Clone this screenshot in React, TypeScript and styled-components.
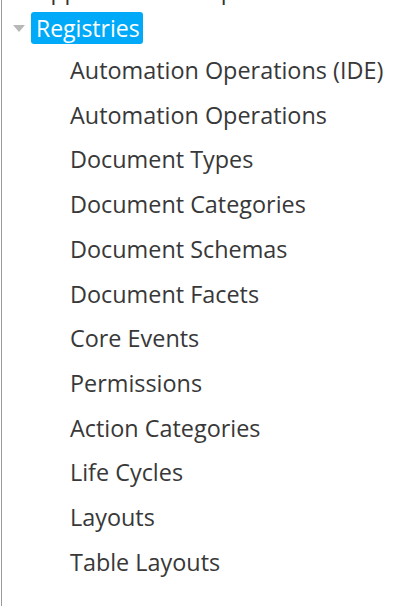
import React from 'react';
import styled, { createGlobalStyle } from 'styled-components';

const GlobalStyle = createGlobalStyle`
  html, body {
    margin: 0;
    padding: 0;
    background: #fff;
    overflow: hidden;
  }
  body {
    font-family: "Open Sans", "Liberation Sans", sans-serif;
  }
`;

const Panel = styled.div`
  width: 405px;
  height: 606px;
  box-sizing: border-box;
  border-left: 1px solid #9a9a9a;
  margin-left: 1px;
  overflow: hidden;
`;

const Tree = styled.ul`
  list-style: none;
  margin: -26px 0 0;
  padding: 0;
  display: flex;
  flex-direction: column;
  gap: 6px;
`;

const Node = styled.li`
  display: flex;
  flex-direction: column;
`;

const NodeRow = styled.div`
  display: flex;
  align-items: center;
  height: 32px;
  padding-left: 11px;
  gap: 6px;
`;

const Caret = styled.span<{ $hidden?: boolean }>`
  width: 0;
  height: 0;
  margin-top: 1px;
  border-left: 6px solid transparent;
  border-right: 6px solid transparent;
  border-top: 7px solid #b8b8b8;
  visibility: ${(p) => (p.$hidden ? 'hidden' : 'visible')};
`;

const Label = styled.span<{ $selected?: boolean }>`
  font-size: 23px;
  line-height: 32px;
  padding: 0 3px 0 5px;
  border-radius: 3px;
  white-space: nowrap;
  color: ${(p) => (p.$selected ? '#fff' : '#333')};
  background: ${(p) => (p.$selected ? '#00aaf9' : 'transparent')};
`;

const Children = styled.ul`
  list-style: none;
  margin: 0;
  padding: 4px 0 0 68px;
`;

const Leaf = styled.li`
  font-size: 23.4px;
  line-height: 44.7px;
  color: #383838;
  white-space: nowrap;
`;

const REGISTRIES = [
  'Automation Operations (IDE)',
  'Automation Operations',
  'Document Types',
  'Document Categories',
  'Document Schemas',
  'Document Facets',
  'Core Events',
  'Permissions',
  'Action Categories',
  'Life Cycles',
  'Layouts',
  'Table Layouts',
];

const App: React.FC = () => (
  <>
    <GlobalStyle />
    <Panel>
      <Tree>
        <Node>
          <NodeRow>
            <Caret $hidden />
            <Label>Applications Setup</Label>
          </NodeRow>
        </Node>
        <Node>
          <NodeRow>
            <Caret />
            <Label $selected>Registries</Label>
          </NodeRow>
          <Children>
            {REGISTRIES.map((name) => (
              <Leaf key={name}>{name}</Leaf>
            ))}
          </Children>
        </Node>
      </Tree>
    </Panel>
  </>
);

export default App;
